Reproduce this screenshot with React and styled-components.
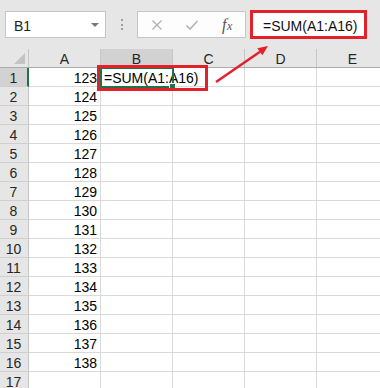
import React from 'react';
import styled, {createGlobalStyle} from 'styled-components';

const GlobalStyle = createGlobalStyle`
  body {
    margin: 0;
    background: #ffffff;
    font-family: "Liberation Sans", Arial, sans-serif;
  }
`;

const GREEN = '#217346';
const RED = '#e3212a';
const GRID = '#d9d9d9';
const HEAD = '#e6e6e6';
const HEAD_ON = '#d2d2d2';

const Wrapper = styled.div`
  position: relative;
  width: 380px;
  height: 388px;
  overflow: hidden;
  background: #ffffff;
`;

//formula bar row
const Toolbar = styled.div`
  display: flex;
  align-items: center;
  height: 49px;
  padding-left: 5px;
  background: ${HEAD};
  box-sizing: border-box;
`;
const NameBox = styled.div`
  display: flex;
  align-items: center;
  justify-content: space-between;
  box-sizing: border-box;
  width: 101px;
  height: 27px;
  padding: 2px 6px 0 8px;
  background: #ffffff;
  border: 1px solid #c6c6c6;
  font-size: 14px;
  color: #222;
`;
const Caret = styled.span`
  width: 0;
  height: 0;
  margin-top: -2px;
  border-left: 4px solid transparent;
  border-right: 4px solid transparent;
  border-top: 4px solid #777;
`;
const Grip = styled.div`
  display: flex;
  flex-direction: column;
  align-items: center;
  gap: 2.5px;
  width: 31px;
`;
const Dot = styled.span`
  width: 2px;
  height: 2px;
  background: #a0a0a0;
`;
const FnBox = styled.div`
  display: flex;
  align-items: center;
  box-sizing: border-box;
  width: 109px;
  height: 27px;
  padding-left: 1px;
  background: #fdfdfd;
  border: 1px solid #c6c6c6;
`;
const IconSlot = styled.div`
  display: flex;
  align-items: center;
  justify-content: center;
  width: 36px;
  height: 100%;
`;
const Fx = styled.span`
  font-family: "Liberation Serif", "Times New Roman", serif;
  font-style: italic;
  color: #555;
  font-size: 16px;
  letter-spacing: 0.5px;
  small {
    font-size: 12px;
  }
`;
const FormulaBar = styled.div`
  display: flex;
  align-items: center;
  box-sizing: border-box;
  width: 117px;
  height: 29px;
  margin-left: 4px;
  padding: 2px 0 0 10px;
  background: #ffffff;
  border: 3px solid ${props => props.marked ? RED : '#c6c6c6'};
  font-size: 14px;
  color: #111;
  white-space: nowrap;
`;

//sheet
const Sheet = styled.div`
  display: grid;
  grid-template-columns: 29px repeat(5, 72px);
  grid-auto-rows: 19px;
`;
const Corner = styled.div`
  display: flex;
  align-items: flex-end;
  justify-content: flex-end;
  padding: 0 3px 3px 0;
  box-sizing: border-box;
  background: ${HEAD};
  border-right: 1px solid #c6c6c6;
  border-bottom: 1px solid #ababab;
`;
const ColHead = styled.div`
  display: flex;
  align-items: flex-end;
  justify-content: center;
  box-sizing: border-box;
  line-height: 14px;
  padding-bottom: ${props => props.active ? 0 : 1}px;
  font-size: 14px;
  color: #262626;
  background: ${props => props.active ? HEAD_ON : HEAD};
  border-right: 1px solid #c6c6c6;
  border-bottom: ${props => props.active ? `2px solid ${GREEN}` : '1px solid #ababab'};
`;
const RowHead = styled.div`
  display: flex;
  align-items: flex-end;
  justify-content: center;
  box-sizing: border-box;
  line-height: 14px;
  padding: 0 ${props => props.active ? 0 : 1}px 1px 0;
  font-size: 14px;
  color: #262626;
  background: ${props => props.active ? HEAD_ON : HEAD};
  border-right: ${props => props.active ? `2px solid ${GREEN}` : '1px solid #c6c6c6'};
  border-bottom: 1px solid #cfcfcf;
`;
const Cell = styled.div`
  position: relative;
  display: flex;
  align-items: flex-end;
  justify-content: ${props => props.num ? 'flex-end' : 'flex-start'};
  box-sizing: border-box;
  line-height: 14px;
  padding: 0 3px 1px 3px;
  font-size: 14px;
  color: #000;
  white-space: nowrap;
  overflow: visible;
  border-right: 1px solid ${GRID};
  border-bottom: 1px solid ${GRID};
  z-index: ${props => props.over ? 2 : 'auto'};
`;
const Selection = styled.div`
  position: absolute;
  left: -1px;
  top: -1px;
  right: -2px;
  bottom: -2px;
  border: 2px solid ${GREEN};
  pointer-events: none;
`;
const Handle = styled.div`
  position: absolute;
  right: -4px;
  bottom: -4px;
  width: 5px;
  height: 5px;
  background: ${GREEN};
  border: 1px solid #ffffff;
`;

//annotations on top
const Mark = styled.div`
  position: absolute;
  left: 97px;
  top: 65px;
  width: 111px;
  height: 26px;
  box-sizing: border-box;
  border: 3px solid ${RED};
  z-index: 5;
`;
const Overlay = styled.svg`
  position: absolute;
  left: 0;
  top: 0;
  z-index: 6;
  pointer-events: none;
`;

const cols = ['A', 'B', 'C', 'D', 'E'];
const rows = Array.from({length: 17}, (_, i) => i + 1);

export default function App(){
  return(
    <Wrapper>
      <GlobalStyle />
      <Toolbar>
        <NameBox>
          B1
          <Caret />
        </NameBox>
        <Grip>
          <Dot /><Dot /><Dot />
        </Grip>
        <FnBox>
          <IconSlot>
            <svg width="12" height="12" viewBox="0 0 12 12">
              <path d="M1.5 1.5 L10.5 10.5 M10.5 1.5 L1.5 10.5" stroke="#b3b3b3" strokeWidth="1.4" fill="none" />
            </svg>
          </IconSlot>
          <IconSlot>
            <svg width="14" height="12" viewBox="0 0 14 12">
              <path d="M1.5 6.5 L5 10 L12.5 2" stroke="#b3b3b3" strokeWidth="1.6" fill="none" />
            </svg>
          </IconSlot>
          <IconSlot>
            <Fx>f<small>x</small></Fx>
          </IconSlot>
        </FnBox>
        <FormulaBar marked>=SUM(A1:A16)</FormulaBar>
      </Toolbar>
      <Sheet>
        <Corner>
          <svg width="11" height="11" viewBox="0 0 11 11">
            <polygon points="11,0 11,11 0,11" fill="#c4c4c4" />
          </svg>
        </Corner>
        {cols.map(c => (
          <ColHead key={c} active={c === 'B'}>{c}</ColHead>
        ))}
        {rows.map(r => (
          <React.Fragment key={r}>
            <RowHead active={r === 1}>{r}</RowHead>
            <Cell num>{r <= 16 ? 122 + r : ''}</Cell>
            {r === 1 ? (
              <Cell over>
                =SUM(A1:A16)
                <Selection />
                <Handle />
              </Cell>
            ) : <Cell />}
            <Cell />
            <Cell />
            <Cell />
          </React.Fragment>
        ))}
      </Sheet>
      <Mark />
      <Overlay width="380" height="388">
        <line x1="216" y1="82" x2="260" y2="51.7" stroke={RED} strokeWidth="2.5" />
        <polygon points="268,46 262.3,55.2 257.3,48.2" fill={RED} />
      </Overlay>
    </Wrapper>
  )
}
